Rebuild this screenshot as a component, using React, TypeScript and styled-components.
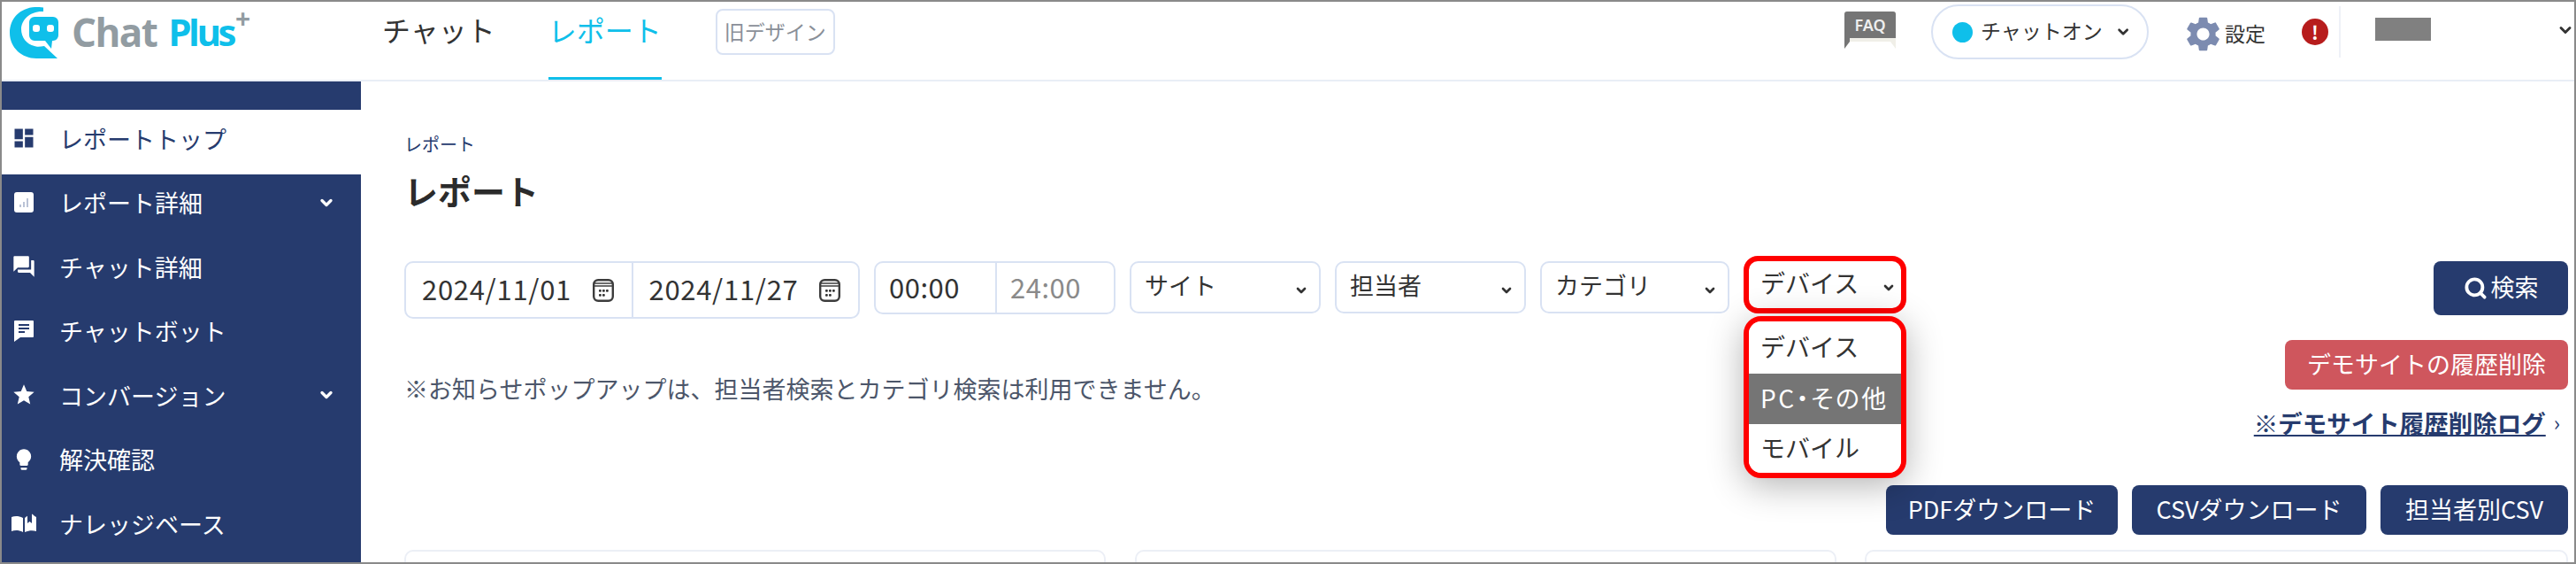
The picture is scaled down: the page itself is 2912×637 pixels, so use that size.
import React from 'react';
import styled, { createGlobalStyle } from 'styled-components';
import { ChevronDown, Search } from 'lucide-react';
import { MdDashboard, MdForum, MdStar, MdLightbulb, MdSettings } from 'react-icons/md';

const NAVY = '#263b6e';
const CYAN = '#0fbfea';
const LINE = '#d9e2f3';
const JP = `'Noto Sans CJK JP', 'Noto Sans', sans-serif`;

const GlobalStyle = createGlobalStyle`
  html, body {
    margin: 0;
    padding: 0;
    background: #fff;
  }
  body {
    font-family: ${JP};
    color: #333;
  }
`;

const Frame = styled.div`
  box-sizing: border-box;
  width: 2912px;
  height: 637px;
  border: 2px solid #8a8a8a;
  overflow: hidden;
  display: flex;
  flex-direction: column;
`;

const Header = styled.header`
  box-sizing: border-box;
  height: 90px;
  flex: none;
  display: flex;
  border-bottom: 2px solid #e9eef6;
`;

const LogoLink = styled.a`
  width: 430px;
  flex: none;
  display: flex;
  align-items: flex-start;
  padding: 6px 0 0 9px;
  box-sizing: border-box;
`;

const LogoText = styled.div`
  font-family: 'Open Sans', sans-serif;
  font-weight: 700;
  font-size: 44px;
  line-height: 56px;
  letter-spacing: -1.6px;
  margin-left: 14px;
  color: #929ca2;
  display: flex;
  gap: 13px;
`;

const LogoPlus = styled.span`
  color: ${CYAN};
  position: relative;
  font-size: 42px;
  letter-spacing: -3.5px;
`;

const LogoSup = styled.span`
  position: absolute;
  left: 100%;
  top: -15px;
  margin-left: 2px;
  font-size: 30px;
  color: #929ca2;
`;

const TopNav = styled.nav`
  display: flex;
  gap: 60px;
`;

const TopNavItem = styled.a<{ $active?: boolean }>`
  font-size: 32px;
  line-height: 62px;
  height: 88px;
  box-sizing: border-box;
  white-space: nowrap;
  color: ${(p) => (p.$active ? CYAN : '#333')};
  border-bottom: 3px solid ${(p) => (p.$active ? CYAN : 'transparent')};
`;

const OldDesign = styled.a`
  box-sizing: border-box;
  height: 52px;
  width: 135px;
  margin: 8px 0 0 61px;
  border: 2px solid ${LINE};
  border-radius: 8px;
  color: #8a8f98;
  font-size: 23px;
  line-height: 46px;
  text-align: center;
  white-space: nowrap;
`;

const HeaderRight = styled.div`
  margin-left: auto;
  display: flex;
  align-items: flex-start;
`;

const FaqIcon = styled.svg`
  width: 58px;
  height: 42px;
  margin-top: 11px;
`;

const ChatPill = styled.button`
  box-sizing: border-box;
  width: 246px;
  height: 62px;
  margin: 3px 0 0 40px;
  padding: 0 18px 4px 22px;
  border: 2px solid ${LINE};
  border-radius: 31px;
  background: #fff;
  display: flex;
  align-items: center;
  font: inherit;
  font-size: 23px;
  color: #333;
  white-space: nowrap;

  svg {
    margin: 4px 0 0 14px;
  }
`;

const Dot = styled.span`
  width: 23px;
  height: 23px;
  border-radius: 50%;
  background: ${CYAN};
  margin: 4px 9px 0 0;
  flex: none;
`;

const SettingsLink = styled.a`
  display: flex;
  align-items: center;
  margin: 10px 0 0 42px;
  font-size: 23px;
  color: #333;
  line-height: 50px;
  white-space: nowrap;

  svg {
    color: #7c8bb0;
    margin: 3px 1px 0 -4px;
  }
`;

const AlertBadge = styled.span`
  width: 30px;
  height: 30px;
  margin: 19px 12px 0 41px;
  border-radius: 50%;
  background: #b71c1c;
  color: #fff;
  font-size: 21px;
  font-weight: 700;
  line-height: 30px;
  text-align: center;
`;

const UserMenu = styled.div`
  box-sizing: border-box;
  width: 266px;
  height: 58px;
  margin-top: 5px;
  padding: 13px 0 0 39px;
  border-left: 2px solid #eef1f7;
  display: flex;
  align-items: flex-start;
  justify-content: space-between;

  svg {
    margin-top: 4px;
  }
`;

const UserMask = styled.span`
  width: 63px;
  height: 26px;
  background: #808080;
`;

const Body = styled.div`
  flex: 1;
  display: flex;
  min-height: 0;
`;

const Sidebar = styled.aside`
  width: 406px;
  flex: none;
  background: ${NAVY};
  padding-top: 32px;
`;

const SideItem = styled.a<{ $active?: boolean }>`
  box-sizing: border-box;
  height: 72.5px;
  padding: 0 29px 8px 9px;
  display: flex;
  align-items: center;
  font-size: 27px;
  color: ${(p) => (p.$active ? NAVY : '#fff')};
  background: ${(p) => (p.$active ? '#fff' : 'transparent')};
  white-space: nowrap;
`;

const SideIcon = styled.span`
  width: 32px;
  height: 32px;
  margin-right: 24px;
  font-size: 28px;
  display: flex;
  align-items: center;
  justify-content: center;
  flex: none;
`;

const SideLabel = styled.span`
  flex: 1;
`;

const Main = styled.main`
  flex: 1;
  min-width: 0;
  padding: 56px 7px 0 49px;
`;

const Breadcrumb = styled.div`
  font-size: 20px;
  line-height: 30px;
  color: ${NAVY};
`;

const PageTitle = styled.h1`
  margin: 9px 0 0;
  font-size: 38px;
  font-weight: 700;
  line-height: 56px;
  color: #2b2b2b;
`;

const FilterRow = styled.div`
  margin-top: 52px;
  display: flex;
  align-items: flex-start;
`;

const InputGroup = styled.div<{ $height: number; $width: number }>`
  box-sizing: border-box;
  width: ${(p) => p.$width}px;
  height: ${(p) => p.$height}px;
  margin-right: 16px;
  border: 2px solid ${LINE};
  border-radius: 10px;
  display: flex;
  flex: none;
`;

const DateCell = styled.div`
  flex: 1;
  display: flex;
  align-items: center;
  justify-content: space-between;
  padding: 0 20px 4px 18px;
  font-size: 31px;
  letter-spacing: 0.7px;
  color: #333;

  & + & {
    border-left: 2px solid ${LINE};
  }

  svg {
    margin-top: 5px;
  }
`;

const TimeCell = styled.div<{ $muted?: boolean; $width: number }>`
  width: ${(p) => p.$width}px;
  box-sizing: border-box;
  display: flex;
  align-items: center;
  padding: 0 0 4px 15px;
  font-size: 31px;
  letter-spacing: 0.5px;
  color: ${(p) => (p.$muted ? '#8a8a8a' : '#333')};

  & + & {
    border-left: 2px solid ${LINE};
  }
`;

const SelectBox = styled.div<{ $width: number; $highlight?: boolean; $gap?: number }>`
  box-sizing: border-box;
  width: ${(p) => p.$width}px;
  height: ${(p) => (p.$highlight ? 65 : 59)}px;
  margin-right: ${(p) => p.$gap ?? 16}px;
  margin-top: ${(p) => (p.$highlight ? -6 : 0)}px;
  padding: 0 ${(p) => (p.$highlight ? 6 : 12)}px 6px ${(p) => (p.$highlight ? 13 : 15)}px;
  border: ${(p) => (p.$highlight ? '6px solid #f00' : `2px solid ${LINE}`)};
  border-radius: ${(p) => (p.$highlight ? 16 : 10)}px;
  display: flex;
  align-items: center;
  justify-content: space-between;
  font-size: ${(p) => (p.$highlight ? 28 : 27)}px;
  color: #333;
  flex: none;

  svg {
    margin-top: 12px;
  }
`;

const DeviceWrap = styled.div`
  position: relative;
  flex: none;
`;

const DeviceMenu = styled.ul`
  position: absolute;
  top: 62px;
  left: 0;
  box-sizing: border-box;
  width: 184px;
  height: 183px;
  margin: 0;
  padding: 0;
  list-style: none;
  background: #fff;
  border: 6px solid #f00;
  border-radius: 20px;
  overflow: hidden;
  box-shadow: 0 8px 40px rgba(0, 0, 0, 0.3);
  z-index: 2;
`;

const DeviceOption = styled.li<{ $selected?: boolean; $height: number }>`
  height: ${(p) => p.$height}px;
  padding: 0 0 4px 13px;
  box-sizing: border-box;
  display: flex;
  align-items: center;
  font-size: 28px;
  white-space: nowrap;
  font-feature-settings: ${(p) => (p.$selected ? "'palt'" : 'normal')};
  letter-spacing: ${(p) => (p.$selected ? '2.5px' : '0')};
  background: ${(p) => (p.$selected ? '#757575' : '#fff')};
  color: ${(p) => (p.$selected ? '#fff' : '#333')};
`;

const NavyButton = styled.button<{ $height?: number; $width?: number }>`
  box-sizing: border-box;
  height: ${(p) => p.$height ?? 56}px;
  width: ${(p) => (p.$width ? `${p.$width}px` : 'auto')};
  padding: 0 0 4px;
  border: 0;
  border-radius: 8px;
  background: ${NAVY};
  color: #fff;
  font: inherit;
  font-size: 27px;
  white-space: nowrap;
  display: flex;
  align-items: center;
  justify-content: center;
`;

const SearchButton = styled(NavyButton)`
  margin-left: auto;

  svg {
    margin: 4px 4px 0 0;
  }
`;

const NoticeRow = styled.div`
  display: flex;
  justify-content: space-between;
  align-items: flex-start;
  margin-top: 24px;
`;

const Notice = styled.p`
  margin: 35px 0 0;
  font-size: 27px;
  line-height: 40px;
  color: #4c566a;
`;

const NoticeActions = styled.div`
  display: flex;
  flex-direction: column;
  align-items: flex-end;
`;

const DangerButton = styled.button`
  box-sizing: border-box;
  width: 320px;
  height: 56px;
  padding: 0 0 4px;
  border: 0;
  border-radius: 8px;
  background: #cf565d;
  color: #fff;
  font: inherit;
  font-size: 27px;
  white-space: nowrap;
`;

const LogLink = styled.a`
  margin-top: 17px;
  display: flex;
  align-items: center;
  font-size: 27.5px;
  font-weight: 700;
  line-height: 40px;
  color: ${NAVY};
  white-space: nowrap;
`;

const LogText = styled.span`
  text-decoration: underline;
`;

const LogArrow = styled.span`
  margin: 0 9px 0 9px;
  font-weight: 400;
  font-size: 24px;
`;

const DownloadRow = styled.div`
  margin-top: 51px;
  display: flex;
  justify-content: flex-end;
  gap: 16px;
`;

const CardRow = styled.div`
  margin-top: 17px;
  display: grid;
  grid-template-columns: 793px 793px 795px;
  justify-content: space-between;
`;

const Card = styled.div`
  height: 120px;
  border: 2px solid #eceff6;
  border-radius: 10px;
`;

const LogoMark = () => (
  <svg width="56" height="60" viewBox="0 0 56 60" aria-hidden="true">
    <path
      d="M38 .5C16-3 0 10 0 29c0 17 14 29 30 29h24L39 44c-5 1-9 1-11 0C19 42 13 34 13 25 13 14 24 4 38 5z"
      fill={CYAN}
    />
    <path
      d="M28 11h21a6 6 0 0 1 6 6v15a6 6 0 0 1-6 6h-1l-1 9-7-9H28a6 6 0 0 1-6-6V17a6 6 0 0 1 6-6z"
      fill={CYAN}
    />
    <rect x="26" y="20" width="8" height="8" rx="3" fill="#fff" />
    <rect x="42" y="20" width="8" height="8" rx="3" fill="#fff" />
  </svg>
);

const CalendarIcon = () => (
  <svg width="24" height="26" viewBox="0 0 24 26" aria-hidden="true">
    <rect x="1.2" y="1.2" width="21.6" height="23.6" rx="5" fill="#fff" stroke="#3c3c3c" strokeWidth="2.4" />
    <path d="M2 5h20M2 8h20" stroke="#3c3c3c" strokeWidth="1.6" />
    {[7, 11, 15, 7, 11].map((x, i) => (
      <rect key={i} x={x} y={i < 3 ? 12 : 17} width="2.8" height="2.8" rx="1" fill="#333" />
    ))}
  </svg>
);

const ReportIcon = () => (
  <svg width="22" height="23" viewBox="0 0 22 23" aria-hidden="true">
    <rect x="0" y="0" width="22" height="23" rx="3" fill="#fff" />
    <path d="M7 14v3M11 11v6M15 7v10" stroke="#a9b4cc" strokeWidth="1.6" />
  </svg>
);

const BotIcon = () => (
  <svg width="24" height="26" viewBox="0 0 24 26" aria-hidden="true">
    <path d="M2 1h20a1 1 0 0 1 1 1v17a1 1 0 0 1-1 1H8l-7 5V2a1 1 0 0 1 1-1z" fill="#fff" />
    <path d="M6 6h12M6 10h12M6 14h7" stroke={NAVY} strokeWidth="2" />
  </svg>
);

const BookIcon = () => (
  <svg width="28" height="24" viewBox="0 0 28 24" aria-hidden="true">
    <path d="M0 5c4-1.500 8-1.500 13 1v16c-5-2.500-9-2.500-13-1z" fill="#fff" />
    <path d="M15 6c1-1 2-1.700 3-2.200V12l2.500-2 2.500 2V1.500l1 .5c1 1 2 2 4 3v16c-4-1-8-1-13 1z" fill="#fff" />
  </svg>
);

const sideItems = [
  { label: 'レポートトップ', icon: <MdDashboard />, active: true },
  { label: 'レポート詳細', icon: <ReportIcon />, more: true },
  { label: 'チャット詳細', icon: <MdForum /> },
  { label: 'チャットボット', icon: <BotIcon /> },
  { label: 'コンバージョン', icon: <MdStar />, more: true },
  { label: '解決確認', icon: <MdLightbulb /> },
  { label: 'ナレッジベース', icon: <BookIcon /> },
];

const selects = [
  { label: 'サイト', width: 216 },
  { label: '担当者', width: 216 },
  { label: 'カテゴリ', width: 214 },
];

const App: React.FC = () => (
  <>
    <GlobalStyle />
    <Frame>
      <Header>
        <LogoLink>
          <LogoMark />
          <LogoText>
            <span>Chat</span>
            <LogoPlus>
              Plus
              <LogoSup>+</LogoSup>
            </LogoPlus>
          </LogoText>
        </LogoLink>
        <TopNav>
          <TopNavItem>チャット</TopNavItem>
          <TopNavItem $active>レポート</TopNavItem>
        </TopNav>
        <OldDesign>旧デザイン</OldDesign>
        <HeaderRight>
          <FaqIcon viewBox="0 0 58 42" aria-hidden="true">
            <path d="M3 0h52a3 3 0 0 1 3 3v39l-6-8H6l-6 8V3a3 3 0 0 1 3-3z" fill="#f0efe8" />
            <path d="M3 0h52a3 3 0 0 1 3 3v27H0V3a3 3 0 0 1 3-3z" fill="#757575" />
            <path d="M0 28h6v6l-6 8z" fill="#757575" />
            <text x="29" y="22" textAnchor="middle" fontSize="18" fontWeight="600" fill="#eee" fontFamily="'Noto Sans', sans-serif">
              FAQ
            </text>
          </FaqIcon>
          <ChatPill>
            <Dot />
            チャットオン
            <ChevronDown size={20} strokeWidth={3.5} color="#333" />
          </ChatPill>
          <SettingsLink>
            <MdSettings size={47} />
            設定
          </SettingsLink>
          <AlertBadge>!</AlertBadge>
          <UserMenu>
            <UserMask />
            <ChevronDown size={20} strokeWidth={3.5} color="#333" />
          </UserMenu>
        </HeaderRight>
      </Header>
      <Body>
        <Sidebar>
          {sideItems.map((item) => (
            <SideItem key={item.label} $active={item.active}>
              <SideIcon>{item.icon}</SideIcon>
              <SideLabel>{item.label}</SideLabel>
              {item.more && <ChevronDown size={20} strokeWidth={4} />}
            </SideItem>
          ))}
        </Sidebar>
        <Main>
          <Breadcrumb>レポート</Breadcrumb>
          <PageTitle>レポート</PageTitle>
          <FilterRow>
            <InputGroup $width={515} $height={65}>
              <DateCell>
                2024/11/01
                <CalendarIcon />
              </DateCell>
              <DateCell>
                2024/11/27
                <CalendarIcon />
              </DateCell>
            </InputGroup>
            <InputGroup $width={273} $height={60}>
              <TimeCell $width={136}>00:00</TimeCell>
              <TimeCell $width={135} $muted>
                24:00
              </TimeCell>
            </InputGroup>
            {selects.map((s) => (
              <SelectBox key={s.label} $width={s.width}>
                {s.label}
                <ChevronDown size={16} strokeWidth={4} />
              </SelectBox>
            ))}
            <DeviceWrap>
              <SelectBox $width={184} $highlight $gap={0}>
                デバイス
                <ChevronDown size={16} strokeWidth={4} />
              </SelectBox>
              <DeviceMenu>
                <DeviceOption $height={59}>デバイス</DeviceOption>
                <DeviceOption $height={57} $selected>
                  PC・その他
                </DeviceOption>
                <DeviceOption $height={55}>モバイル</DeviceOption>
              </DeviceMenu>
            </DeviceWrap>
            <SearchButton $height={61} $width={152}>
              <Search size={27} strokeWidth={3.4} />
              検索
            </SearchButton>
          </FilterRow>
          <NoticeRow>
            <Notice>※お知らせポップアップは、担当者検索とカテゴリ検索は利用できません。</Notice>
            <NoticeActions>
              <DangerButton>デモサイトの履歴削除</DangerButton>
              <LogLink>
                <LogText>※デモサイト履歴削除ログ</LogText>
                <LogArrow>›</LogArrow>
              </LogLink>
            </NoticeActions>
          </NoticeRow>
          <DownloadRow>
            <NavyButton $width={262}>PDFダウンロード</NavyButton>
            <NavyButton $width={265}>CSVダウンロード</NavyButton>
            <NavyButton $width={212}>担当者別CSV</NavyButton>
          </DownloadRow>
          <CardRow>
            <Card />
            <Card />
            <Card />
          </CardRow>
        </Main>
      </Body>
    </Frame>
  </>
);

export default App;
